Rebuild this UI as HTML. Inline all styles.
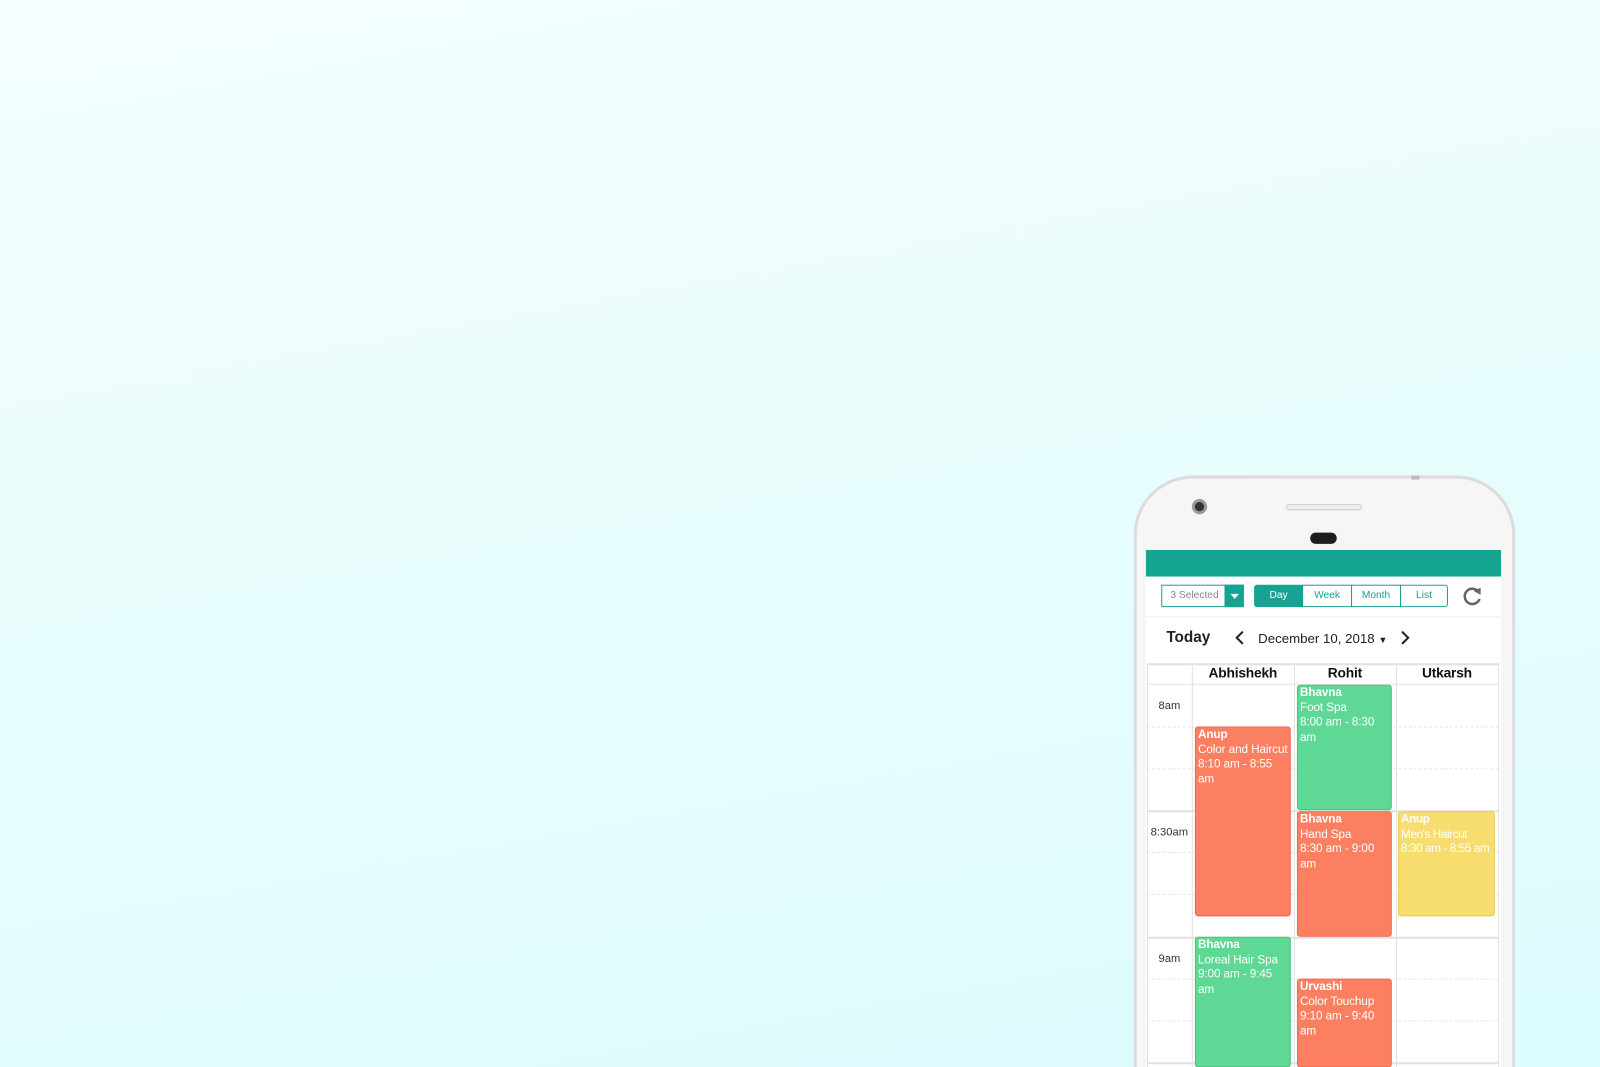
<!DOCTYPE html>
<html><head><style>
*{margin:0;padding:0;box-sizing:border-box}
html,body{width:1600px;height:1067px;overflow:hidden}
body{background:linear-gradient(170deg,#f5fefe 0%,#e9fdfd 45%,#dcfcfd 100%);font-family:"Liberation Sans",sans-serif;position:relative}
#w{position:absolute;left:0;top:0;width:1568px;height:1046px;transform:scale(1.020408);transform-origin:0 0;overflow:hidden}
.abs{position:absolute}
.phone{left:1111px;top:466px;width:374px;height:600px;border-radius:58px 58px 0 0;background:#f6f6f6;border:3px solid #dcdcdc;border-bottom:none}
.screen{left:1123px;top:539px;width:348px;height:507px;background:#fff}
.ev{position:absolute;color:#fff;font-size:11.5px;line-height:14.5px;padding:0 2px;border-radius:3px;overflow:hidden;letter-spacing:-0.1px}
.ev b{display:block}
.red{background:#fd7f62;border:1px solid #ef6a50}
.green{background:#5ed894;border:1px solid #48c47f}
.yel{background:#f6dd6e;border:1px solid #eccd55}
.hl{position:absolute;left:1124px;width:345px;border-top:1px dashed #e6e6e6}
.hs{position:absolute;left:1124px;width:345px;border-top:2px solid #e2e2e2}
.vl{position:absolute;top:650px;height:396px;border-left:1px solid #e2e2e2}
.tm{position:absolute;left:1124px;width:44px;text-align:center;font-size:11px;color:#333}
.btn{position:absolute;top:573px;height:22px;font-size:10px;color:#17a393;text-align:center;line-height:20px;border:1px solid #17a393}
.hd{position:absolute;top:652px;width:100px;text-align:center;font-size:13.5px;color:#111;font-weight:bold;letter-spacing:-0.2px}
</style></head><body><div id="w">
<div class="abs phone"></div>
<div class="abs" style="left:1168px;top:489px;width:15px;height:15px;border-radius:50%;background:#333;border:3px solid #999"></div>
<div class="abs" style="left:1260px;top:494px;width:75px;height:6px;border-radius:3px;background:#eee;border:1px solid #ccc"></div>
<div class="abs" style="left:1284px;top:522px;width:26px;height:11px;border-radius:6px;background:#1e1e1e"></div>
<div class="abs" style="left:1383px;top:466px;width:8px;height:4px;background:#bbb"></div>
<div class="abs screen"></div>
<div class="abs" style="left:1123px;top:539px;width:348px;height:26px;background:#17a593"></div>
<div class="abs" style="left:1138px;top:573px;width:81px;height:22px;border:1px solid #17a393;font-size:10px;color:#888;line-height:20px;padding-left:8px">3 Selected</div>
<div class="abs" style="left:1200px;top:573px;width:19px;height:22px;background:#17a393"><div style="margin:9px auto 0;width:0;height:0;border-left:4px solid transparent;border-right:4px solid transparent;border-top:5px solid #fff"></div></div>
<div class="btn" style="left:1229px;width:48px;background:#17a393;color:#fff;border-radius:3px 0 0 3px">Day</div>
<div class="btn" style="left:1276px;width:49px">Week</div>
<div class="btn" style="left:1324px;width:49px">Month</div>
<div class="btn" style="left:1372px;width:47px;border-radius:0 3px 3px 0">List</div>
<svg class="abs" style="left:1432px;top:573px" width="22" height="22" viewBox="0 0 22 22"><path d="M17 7A7.5 7.5 0 1 0 18 14" fill="none" stroke="#666" stroke-width="2.5"/><path d="M12 6L19 3L19 10Z" fill="#666"/></svg>
<div class="abs" style="left:1123px;top:604px;width:348px;border-top:1px solid #f0f0f0"></div>
<div class="abs" style="left:1143px;top:616px;font-size:15px;font-weight:bold;color:#222">Today</div>
<svg class="abs" style="left:1210px;top:618px" width="10" height="14" viewBox="0 0 10 14"><path d="M8 1L2 7L8 13" fill="none" stroke="#222" stroke-width="2"/></svg>
<div class="abs" style="left:1233px;top:618px;font-size:13px;color:#222">December 10, 2018 <span style="font-size:9px">&#9660;</span></div>
<svg class="abs" style="left:1372px;top:618px" width="10" height="14" viewBox="0 0 10 14"><path d="M2 1L8 7L2 13" fill="none" stroke="#222" stroke-width="2"/></svg>
<div class="hs" style="top:650px"></div>
<div class="hd" style="left:1168px">Abhishekh</div>
<div class="hd" style="left:1268px">Rohit</div>
<div class="hd" style="left:1368px">Utkarsh</div>
<div class="hs" style="top:670px;border-top-width:1px"></div>
<div class="hl" style="top:712px"></div><div class="hl" style="top:753px"></div>
<div class="hs" style="top:794px"></div>
<div class="hl" style="top:835px"></div><div class="hl" style="top:876px"></div>
<div class="hs" style="top:918px"></div>
<div class="hl" style="top:959px"></div><div class="hl" style="top:1000px"></div>
<div class="hs" style="top:1041px"></div>
<div class="vl" style="left:1124px"></div><div class="vl" style="left:1168px"></div><div class="vl" style="left:1268px"></div><div class="vl" style="left:1368px"></div><div class="vl" style="left:1468px"></div>
<div class="tm" style="top:686px">8am</div>
<div class="tm" style="top:810px">8:30am</div>
<div class="tm" style="top:934px">9am</div>
<div class="ev red" style="left:1171px;top:712px;width:94px;height:186px"><b>Anup</b>Color and Haircut<br>8:10 am - 8:55 am</div>
<div class="ev green" style="left:1271px;top:671px;width:93px;height:123px"><b>Bhavna</b>Foot Spa<br>8:00 am - 8:30 am</div>
<div class="ev red" style="left:1271px;top:795px;width:93px;height:123px"><b>Bhavna</b>Hand Spa<br>8:30 am - 9:00 am</div>
<div class="ev yel" style="left:1370px;top:795px;width:95px;height:103px;white-space:nowrap;letter-spacing:-0.4px"><b>Anup</b>Men's Haircut<br>8:30 am - 8:55 am</div>
<div class="ev green" style="left:1171px;top:918px;width:94px;height:128px"><b>Bhavna</b>Loreal Hair Spa<br>9:00 am - 9:45 am</div>
<div class="ev red" style="left:1271px;top:959px;width:93px;height:87px"><b>Urvashi</b>Color Touchup<br>9:10 am - 9:40 am</div>
</div></body></html>
